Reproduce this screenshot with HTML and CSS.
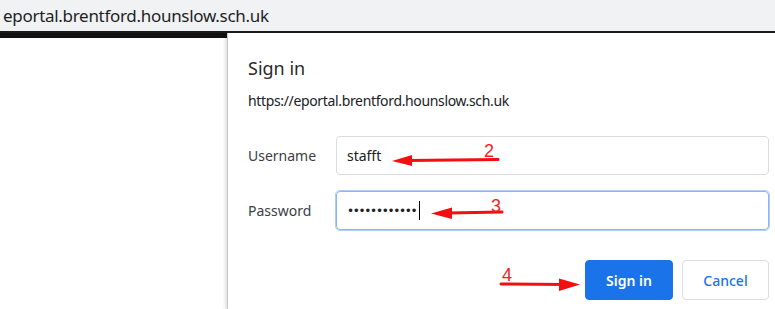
FILE: index.html
```html
<!DOCTYPE html>
<html lang="en">
<head>
    <meta charset="UTF-8">
    <title>Sign in</title>
    <link rel="stylesheet" href="styles.css">
</head>
<body>
    <!-- Address bar -->
    <header class="topbar">
        <span class="address">eportal.brentford.hounslow.sch.uk</span>
    </header>

    <div class="stage">
        <div class="backdrop"></div>

        <!-- Sign in dialog -->
        <section class="dialog">
            <h1 class="dialog-title">Sign in</h1>
            <p class="dialog-origin">https://eportal.brentford.hounslow.sch.uk</p>

            <form class="fields">
                <label class="field-label" for="user">Username</label>
                <div class="field-input"><span id="user">stafft</span></div>

                <label class="field-label" for="pass">Password</label>
                <div class="field-input focused"><span id="pass" class="dots">••••••••••••</span><span class="caret"></span></div>
            </form>

            <div class="actions">
                <button class="btn btn-primary" type="button">Sign in</button>
                <button class="btn btn-plain" type="button">Cancel</button>
            </div>
        </section>
    </div>

    <!-- Red annotation arrows drawn over the screenshot -->
    <svg class="notes" width="775" height="309" viewBox="0 0 775 309">
        <g fill="#f20f0f" stroke="#f20f0f">
            <line x1="498" y1="159.5" x2="408" y2="160.5" stroke-width="3" stroke-linecap="round"/>
            <polygon points="392,161 412,155 412,166" stroke="none"/>

            <line x1="502" y1="212" x2="448" y2="213" stroke-width="3" stroke-linecap="round"/>
            <polygon points="431,213.5 452,207.5 452,219" stroke="none"/>

            <line x1="501" y1="284" x2="564" y2="284.5" stroke-width="3" stroke-linecap="round"/>
            <polygon points="580,284.5 559,278.5 559,291" stroke="none"/>
        </g>
        <g class="note-num" fill="#f21d1d">
            <text x="484" y="157">2</text>
            <text x="491" y="212">3</text>
            <text x="502" y="281">4</text>
        </g>
    </svg>
</body>
</html>
```

FILE: styles.css
```css
/* Page reset */
* {
    margin: 0;
    padding: 0;
    box-sizing: border-box;
}

body {
    width: 775px;
    height: 309px;
    overflow: hidden;
    position: relative;
    background: #fff;
    font-family: "Noto Sans", "Open Sans", sans-serif;
    color: #202124;
}

/* Address bar */
.topbar {
    height: 33px;
    background-color: #f1f2f4;
    border-bottom: 2px solid #1b1b1b;
    padding-left: 3px;
}

.address {
    display: block;
    font-size: 17px;
    line-height: 31px;
    letter-spacing: -0.3px;
    color: #1f1f1f;
}

/* Area under the address bar */
.stage {
    display: flex;
    height: 276px;
}

.backdrop {
    width: 227px;
    border-top: 5px solid #111;
    flex-shrink: 0;
}

/* Dialog */
.dialog {
    width: 562px;
    flex-shrink: 0;
    background: #fff;
    border-left: 1px solid #c9c9c9;
    box-shadow: -2px 0 3px rgba(0, 0, 0, 0.12);
    padding: 23px 20px 0 20px;
}

.dialog-title {
    font-size: 18px;
    font-weight: normal;
    line-height: 24px;
    color: #2b2b2b;
}

.dialog-origin {
    font-size: 14px;
    line-height: 20px;
    margin-top: 11px;
    color: #202124;
    letter-spacing: -0.35px;
}

/* Username / password rows */
.fields {
    display: grid;
    grid-template-columns: 88px 1fr;
    row-gap: 16px;
    align-items: center;
    margin-top: 25px;
}

.field-label {
    font-size: 14px;
    color: #3c4043;
}

.field-input {
    height: 39px;
    border: 1px solid #dadce0;
    border-radius: 4px;
    padding-left: 10px;
    display: flex;
    align-items: center;
    font-size: 14px;
    color: #202124;
}

.field-input.focused {
    border-color: #8ab4f8;
    box-shadow: 0 0 0 1px #b3cefb;
}

.dots {
    font-family: "DejaVu Sans", sans-serif;
    font-size: 12px;
    letter-spacing: -1.3px;
    color: #202124;
}

.caret {
    width: 1px;
    height: 19px;
    background: #000;
    margin-left: 3px;
}

/* Buttons */
.actions {
    display: flex;
    justify-content: flex-end;
    gap: 9px;
    margin-top: 30px;
}

.btn {
    height: 40px;
    border-radius: 4px;
    font-family: "Noto Sans", "Open Sans", sans-serif;
    font-size: 14px;
    font-weight: 600;
}

.btn-primary {
    width: 88px;
    background: #1a73e8;
    border: 1px solid #1a73e8;
    color: #fff;
}

.btn-plain {
    width: 87px;
    background: #fff;
    border: 1px solid #dadce0;
    color: #1a73e8;
    font-weight: 500;
}

/* Annotation overlay */
.notes {
    position: absolute;
    left: 0;
    top: 0;
    pointer-events: none;
}

.note-num text {
    font-family: "Liberation Sans", sans-serif;
    font-size: 18px;
    font-weight: 300;
}
```
